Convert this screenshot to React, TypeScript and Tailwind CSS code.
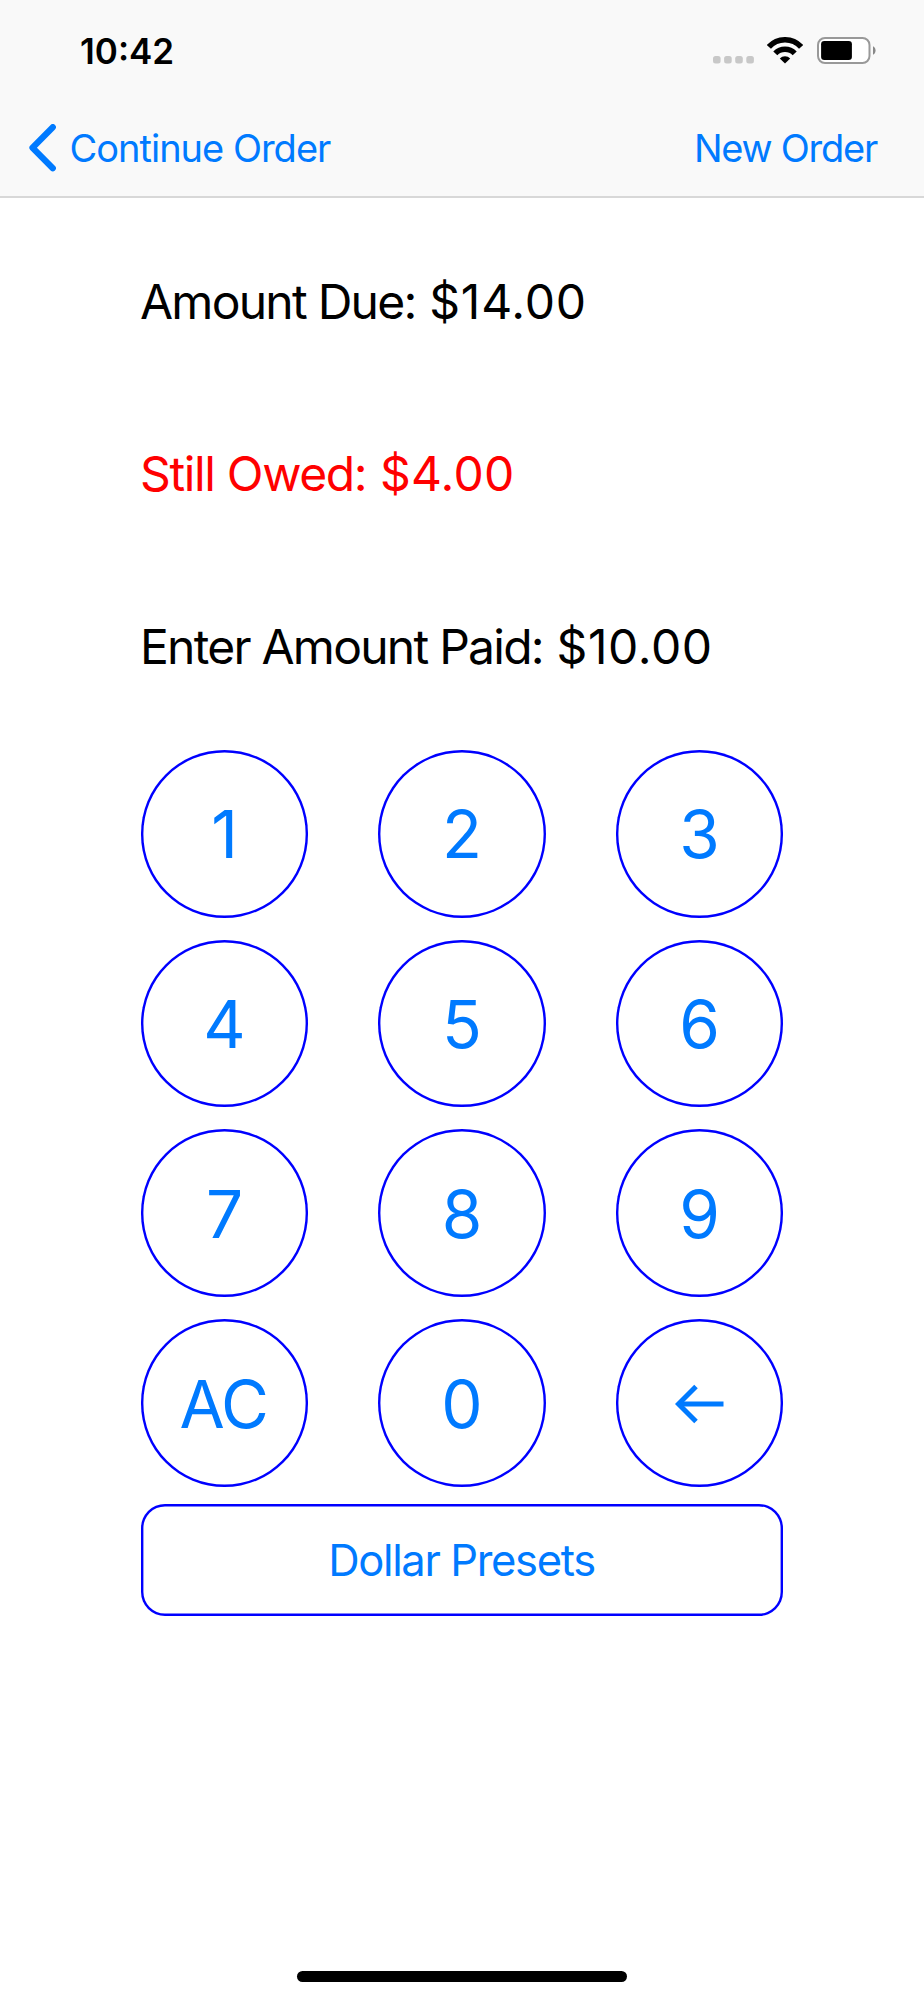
const keys = ["1", "2", "3", "4", "5", "6", "7", "8", "9", "AC", "0", "←"]

function StatusBar() {
  return (
    <div className="flex h-[101px] items-center justify-between pl-[80px] pr-[48px]">
      <span className="pt-px text-[35px] font-semibold leading-none">10:42</span>
      <div className="flex items-center">
        <svg width="41" height="8" viewBox="0 0 41 8" className="mr-[13px] mt-[18px] fill-[#c8c8c8]">
          <rect x="0" width="7.6" height="7.6" rx="2.5" />
          <rect x="11.1" width="7.6" height="7.6" rx="2.5" />
          <rect x="22.2" width="7.6" height="7.6" rx="2.5" />
          <rect x="33.3" width="7.6" height="7.6" rx="2.5" />
        </svg>
        <svg width="36" height="27" viewBox="0 0 36 27" fill="none" stroke="#000" strokeWidth="5.6">
          <path d="M1.9 9.9a21.8 21.8 0 0 1 32.2 0" />
          <path d="M8.3 16.4a13.4 13.4 0 0 1 19.4 0" />
          <path d="M18 26.6l-5.2-5.2a7.4 7.4 0 0 1 10.4 0z" fill="#000" stroke="none" />
        </svg>
        <svg width="59" height="27" viewBox="0 0 59 27" className="ml-[14px]">
          <rect x="1" y="1" width="51.5" height="25" rx="7" fill="#fff" stroke="#999" strokeWidth="2" />
          <rect x="4.1" y="4" width="30.8" height="19" rx="3.2" />
          <path d="M56 9.2c3.4 1.4 3.4 7.2 0 8.6z" fill="#888" />
        </svg>
      </div>
    </div>
  )
}

function NavBar() {
  return (
    <nav className="flex h-[93px] items-center justify-between pl-[28px] pr-[47px] text-[#007aff]">
      <button className="flex items-center">
        <svg width="30" height="48" viewBox="0 0 30 48" fill="none" stroke="currentColor" strokeWidth="6.2" strokeLinecap="round" strokeLinejoin="round">
          <path d="M24.8 3.2L4.5 23.7L24.8 44.2" />
        </svg>
        <span className="ml-[11.5px] text-[38px] leading-none tracking-[-1px]">Continue Order</span>
      </button>
      <button className="text-[38px] leading-none tracking-[-1.25px]">New Order</button>
    </nav>
  )
}

function Key({ label }: { label: string }) {
  return (
    <button className="flex size-[167.8px] items-center justify-center rounded-full pt-[3px] text-[65.6px] leading-none shadow-[inset_0_0_0_2.4px_#0000ff]">
      {label === "←" ? (
        <svg width="49" height="40" viewBox="0 0 49 40" fill="none" stroke="currentColor" strokeWidth="5" className="mb-[2px]">
          <path d="M48.5 20H3" />
          <path d="M21 2.4L3.5 20L21 37.6" />
        </svg>
      ) : (
        <span className={label === "AC" ? "mr-[2px] tracking-[-1.5px]" : ""}>{label}</span>
      )}
    </button>
  )
}

export default function App() {
  return (
    <div className="flex h-[2000px] w-[924px] flex-col bg-white font-['Inter',sans-serif] text-black">
      <header className="h-[198px] border-b-2 border-[#d8d8d8] bg-[#f9f9f9]">
        <StatusBar />
        <NavBar />
      </header>
      <main className="ml-[140.6px] w-[642.8px]">
        <div className="-ml-[0.6px] pt-[17.5px] text-[48px] leading-[172.5px] tracking-[-1.75px]">
          <p className="h-[172.5px]">
            Amount Due: <span className="ml-[2px] tracking-[0.8px]">$14.00</span>
          </p>
          <p className="h-[172.5px] tracking-[-1.35px] text-[#ff0000]">
            Still Owed: <span className="ml-[1.5px] tracking-[0.2px]">$4.00</span>
          </p>
          <p className="h-[172.5px]">
            Enter Amount Paid: <span className="ml-[2px] tracking-[0.6px]">$10.00</span>
          </p>
        </div>
        <div className="mt-[16.8px] grid grid-cols-3 gap-x-[69.7px] gap-y-[22px] text-[#007aff]">
          {keys.map((k) => (
            <Key key={k} label={k} />
          ))}
        </div>
        <button className="mt-[17.2px] flex h-[111.6px] w-full items-center justify-center rounded-[24px] pt-[1px] text-[43.5px] tracking-[-1.35px] text-[#007aff] shadow-[inset_0_0_0_2.4px_#0000ff]">
          <span className="-ml-px">Dollar Presets</span>
        </button>
      </main>
      <div className="mx-auto mb-[18px] mt-auto h-[11px] w-[330px] rounded-full bg-black" />
    </div>
  )
}
